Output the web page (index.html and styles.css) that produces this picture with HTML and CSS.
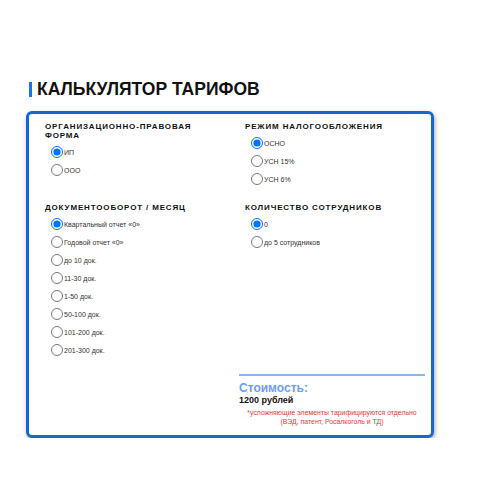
FILE: index.html
```html
<!DOCTYPE html>
<html lang="ru">
<head>
<meta charset="utf-8">
<title>Калькулятор тарифов</title>
<link rel="stylesheet" href="styles.css">
</head>
<body>
<div class="page">
  <h1 class="title">КАЛЬКУЛЯТОР ТАРИФОВ</h1>
  <div class="calc">
    <div class="grid">
      <section class="group">
        <h2 class="group-title narrow">ОРГАНИЗАЦИОННО-ПРАВОВАЯ ФОРМА</h2>
        <label class="opt"><input type="radio" name="form" checked><span>ИП</span></label>
        <label class="opt"><input type="radio" name="form"><span>ООО</span></label>
      </section>
      <section class="group right">
        <h2 class="group-title">РЕЖИМ НАЛОГООБЛОЖЕНИЯ</h2>
        <label class="opt"><input type="radio" name="tax" checked><span>ОСНО</span></label>
        <label class="opt"><input type="radio" name="tax"><span>УСН 15%</span></label>
        <label class="opt"><input type="radio" name="tax"><span>УСН 6%</span></label>
      </section>
      <section class="group">
        <h2 class="group-title">ДОКУМЕНТООБОРОТ / МЕСЯЦ</h2>
        <label class="opt"><input type="radio" name="docs" checked><span>Квартальный отчет «0»</span></label>
        <label class="opt"><input type="radio" name="docs"><span>Годовой отчет «0»</span></label>
        <label class="opt"><input type="radio" name="docs"><span>до 10 док.</span></label>
        <label class="opt"><input type="radio" name="docs"><span>11-30 док.</span></label>
        <label class="opt"><input type="radio" name="docs"><span>1-50 док.</span></label>
        <label class="opt"><input type="radio" name="docs"><span>50-100 док.</span></label>
        <label class="opt"><input type="radio" name="docs"><span>101-200 док.</span></label>
        <label class="opt"><input type="radio" name="docs"><span>201-300 док.</span></label>
      </section>
      <section class="group right">
        <h2 class="group-title">КОЛИЧЕСТВО СОТРУДНИКОВ</h2>
        <label class="opt"><input type="radio" name="staff" checked><span>0</span></label>
        <label class="opt"><input type="radio" name="staff"><span>до 5 сотрудников</span></label>
      </section>
      <div class="cost">
        <div class="cost-label">Стоимость:</div>
        <div class="cost-value">1200 рублей</div>
        <p class="cost-note">*усложняющие элементы тарифицируются отдельно<br>(ВЭД, патент, Росалкоголь и ТД)</p>
      </div>
    </div>
  </div>
</div>
</body>
</html>
```

FILE: styles.css
```css
html, body {
  margin: 0;
  padding: 0;
  background: #fff;
}

body {
  font-family: "Liberation Sans", Arial, sans-serif;
  color: #222;
}

.page {
  padding: 79px 0 0 26px;
  width: 408px;
}

.title {
  margin: 0;
  padding-left: 3px;
  font-size: 17.5px;
  line-height: 20px;
  font-weight: bold;
  color: #111;
  display: flex;
  align-items: center;
}

.title::before {
  content: "";
  display: block;
  width: 3px;
  height: 15px;
  background: #1a73e8;
  margin-right: 5px;
}

.calc {
  margin-top: 12px;
  border: 3px solid #1768cc;
  border-radius: 6px;
  box-shadow: 1px 2px 4px rgba(0, 0, 0, 0.35);
  padding: 8px 6px 9px 16px;
  background: #fff;
}

.grid {
  display: grid;
  grid-template-columns: 194px 186px;
  row-gap: 15px;
}

.group-title {
  margin: 0 0 3px 0;
  font-size: 8px;
  line-height: 9px;
  font-weight: bold;
  letter-spacing: 0.85px;
  color: #111;
}

.narrow {
  max-width: 160px;
}

.right {
  padding-left: 6px;
}

.opt {
  display: flex;
  align-items: center;
  height: 18px;
  font-size: 7px;
  color: #333;
  cursor: pointer;
}

.opt input {
  width: 12px;
  height: 12px;
  margin: 0 1px 0 6px;
}

.cost {
  grid-column: 2;
  border-top: 2px solid #8ab4f8;
  padding-top: 6px;
}

.cost-label {
  font-size: 12px;
  line-height: 13px;
  font-weight: bold;
  color: #6d9eeb;
}

.cost-value {
  font-size: 9px;
  line-height: 10px;
  font-weight: bold;
  color: #111;
}

.cost-note {
  margin: 4px 0 0;
  font-size: 6.9px;
  line-height: 8.5px;
  text-align: center;
  color: #e53935;
}
```
